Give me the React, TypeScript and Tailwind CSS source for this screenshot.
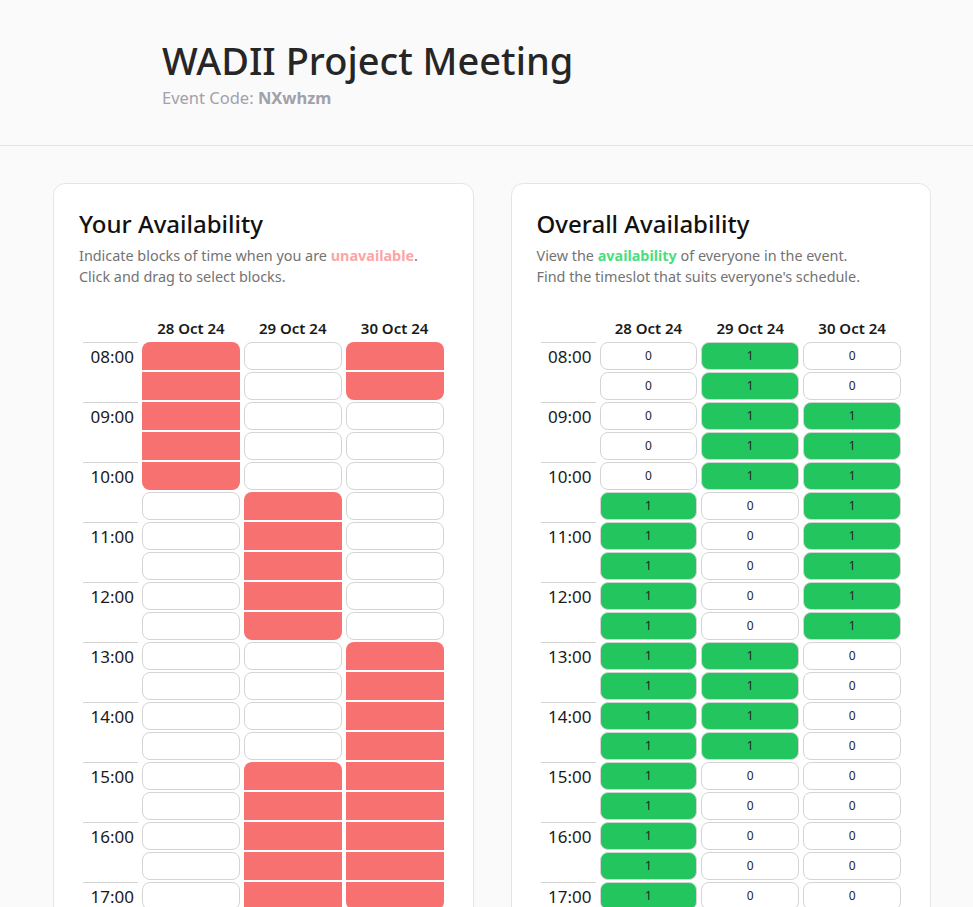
import React from "react";

const dates = ["28 Oct 24", "29 Oct 24", "30 Oct 24"];
const times = [
  "08:00", "09:00", "10:00", "11:00", "12:00", "13:00", "14:00", "15:00", "16:00", "17:00",
];

// true = unavailable, per column, one entry per half hour starting 08:00
const busy: boolean[][] = [
  Array.from({ length: 20 }, (_, i) => i <= 4),
  Array.from({ length: 20 }, (_, i) => (i >= 5 && i <= 9) || i >= 14),
  Array.from({ length: 20 }, (_, i) => i <= 1 || (i >= 10 && i <= 18)),
];

const rows = Array.from({ length: 20 }, (_, i) => i);

const TimeLabel = ({ row }: { row: number }) =>
  row % 2 === 0 ? (
    <div className="h-7 border-t border-[#d4d4d4] text-right pr-1 text-[17px] leading-[27px] text-[#1a1a1a]">
      {times[row / 2]}
    </div>
  ) : (
    <div className="h-7" />
  );

const DateHeader = () => (
  <>
    <div />
    {dates.map((d) => (
      <div
        key={d}
        className="text-center text-[15px] font-semibold leading-5 text-[#1a1a1a] pb-[2px]"
      >
        {d}
      </div>
    ))}
  </>
);

const YourGrid = () => (
  <div className="grid grid-cols-[55px_repeat(3,minmax(0,1fr))] gap-x-1 gap-y-[2px] px-1">
    <DateHeader />
    {rows.map((r) => (
      <React.Fragment key={r}>
        <TimeLabel row={r} />
        {busy.map((col, c) => {
          if (!col[r]) {
            return (
              <div
                key={c}
                className="h-7 rounded-lg border border-[#d4d4d4] bg-white"
              />
            );
          }
          const first = r === 0 || !col[r - 1];
          const last = r === col.length - 1 || !col[r + 1];
          return (
            <div
              key={c}
              className={`h-7 bg-[#f87171] ${first ? "rounded-t-lg" : ""} ${
                last ? "rounded-b-lg" : ""
              }`}
            />
          );
        })}
      </React.Fragment>
    ))}
  </div>
);

const OverallGrid = () => (
  <div className="grid grid-cols-[55px_repeat(3,minmax(0,1fr))] gap-x-1 gap-y-[2px] px-1">
    <DateHeader />
    {rows.map((r) => (
      <React.Fragment key={r}>
        <TimeLabel row={r} />
        {busy.map((col, c) => {
          const count = col[r] ? 0 : 1;
          return (
            <div
              key={c}
              className={`h-7 rounded-lg border border-[#d4d4d4] flex items-center justify-center text-[12px] text-[#262626] ${
                count > 0 ? "bg-[#22c55e]" : "bg-white"
              }`}
            >
              {count}
            </div>
          );
        })}
      </React.Fragment>
    ))}
  </div>
);

const Card = ({
  title,
  children,
  grid,
}: {
  title: string;
  children: React.ReactNode;
  grid: React.ReactNode;
}) => (
  <div className="bg-white border border-[#e5e5e5] rounded-xl pt-6 px-[25px] pb-8">
    <h2 className="text-[24px] leading-8 font-medium text-[#111111]">{title}</h2>
    <p className="mt-[5px] text-[14.4px] leading-[21px] text-[#737373]">{children}</p>
    <div className="mt-[31px]">{grid}</div>
  </div>
);

export default function App() {
  return (
    <div
      className="min-h-screen bg-[#fafafa]"
      style={{ fontFamily: '"Noto Sans", "Open Sans", sans-serif' }}
    >
      <header className="border-b border-[#e5e5e5] pl-[162px] pt-[40px] pb-[35px]">
        <h1 className="text-[38px] leading-10 font-medium text-[#262626]">
          WADII Project Meeting
        </h1>
        <p className="mt-[6px] text-[16.5px] leading-6 text-[#a1a1aa]">
          Event Code: <span className="font-bold">NXwhzm</span>
        </p>
      </header>
      <main className="grid grid-cols-2 gap-[37px] pl-[53px] pr-[42px] pt-[37px] pb-10">
        <Card title="Your Availability" grid={<YourGrid />}>
          Indicate blocks of time when you are{" "}
          <span className="font-bold text-[#fca5a5]">unavailable</span>.
          <br />
          Click and drag to select blocks.
        </Card>
        <Card title="Overall Availability" grid={<OverallGrid />}>
          View the <span className="font-bold text-[#4ade80]">availability</span> of
          everyone in the event.
          <br />
          Find the timeslot that suits everyone's schedule.
        </Card>
      </main>
    </div>
  );
}
